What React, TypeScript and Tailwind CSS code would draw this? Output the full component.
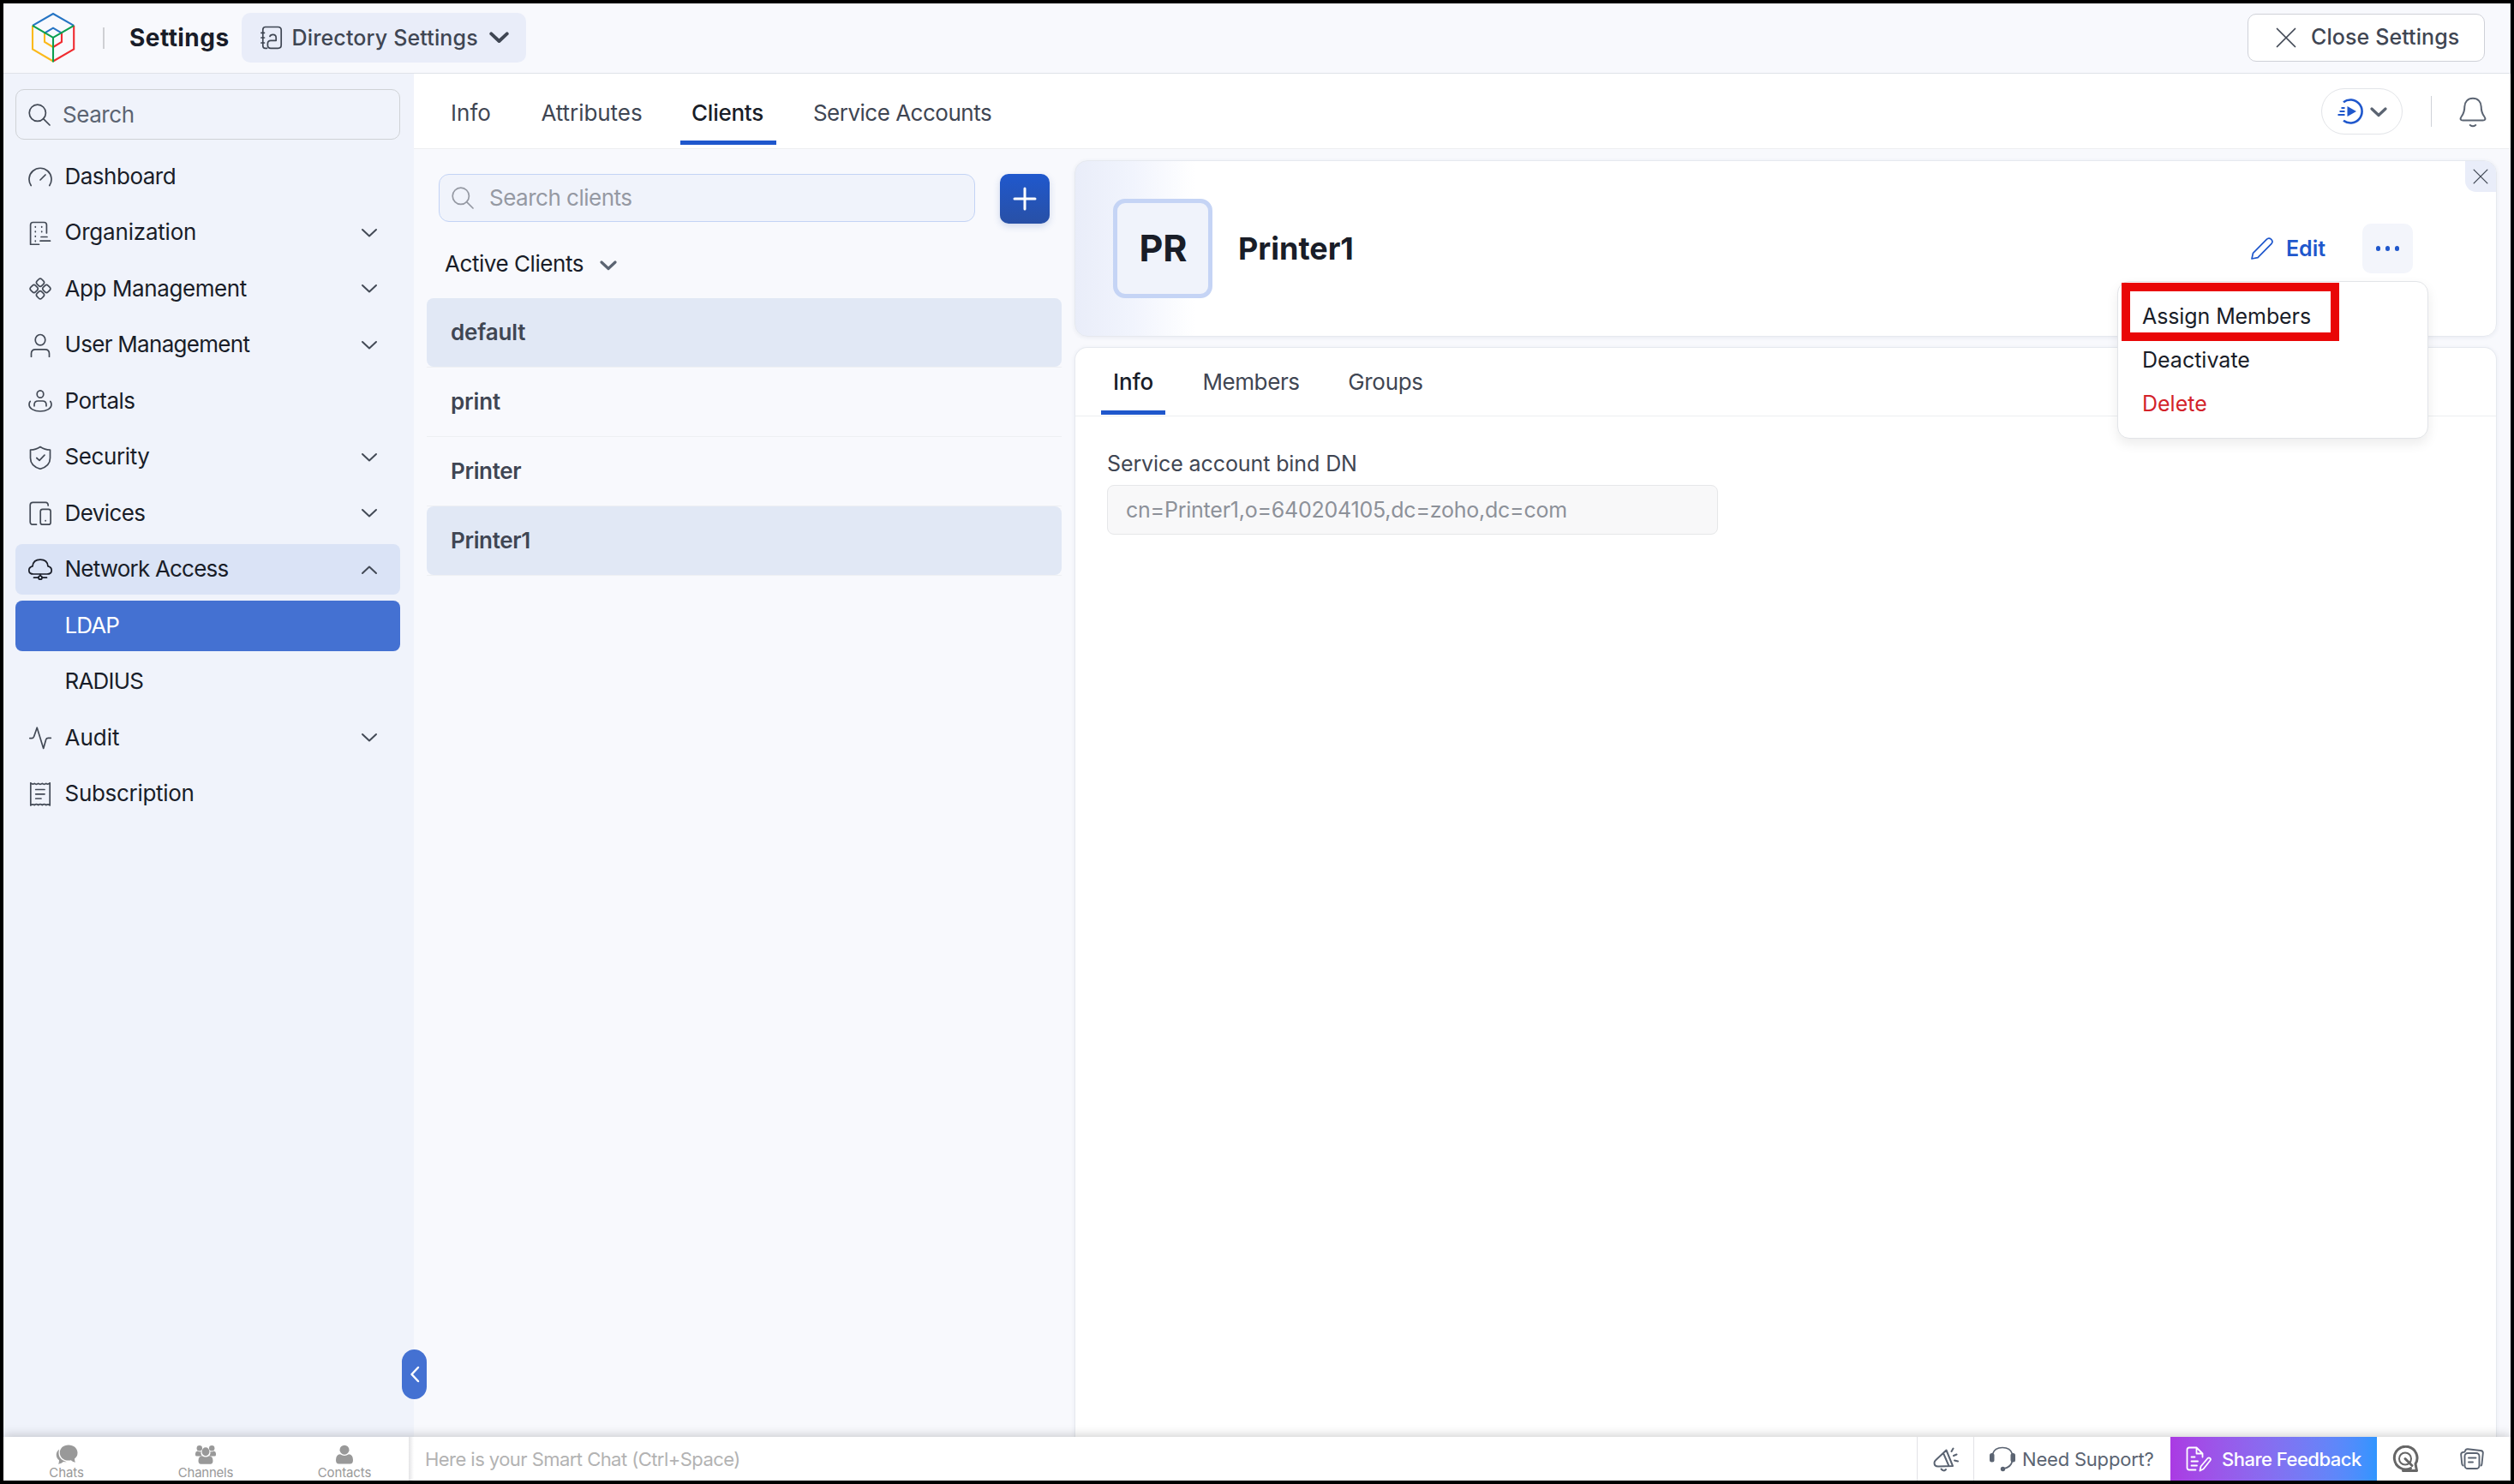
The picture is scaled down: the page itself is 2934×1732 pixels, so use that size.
import type { FC, ReactNode } from 'react';

interface IconProps {
  className?: string;
}

interface NavItem {
  label: string;
  tracking?: string;
  icon?: ReactNode;
  arrow?: 'up' | 'down';
  state?: 'open' | 'active';
}

interface Client {
  name: string;
  tracking?: string;
  highlighted?: boolean;
}

const Line: FC<{ children: ReactNode; className?: string; box?: string; width?: number }> = ({
  children,
  className = 'h-7 w-7',
  box = '0 0 28 28',
  width = 1.7,
}) => (
  <svg
    viewBox={box}
    className={`shrink-0 ${className}`}
    fill="none"
    stroke="currentColor"
    strokeWidth={width}
    strokeLinecap="round"
    strokeLinejoin="round"
  >
    {children}
  </svg>
);

const Logo: FC = () => (
  <svg viewBox="0 0 52 60" className="h-[60px] w-[52px] shrink-0" fill="none" strokeWidth="2.1">
    <path d="M16 25V35L26 41" stroke="#fbb91b" />
    <path d="M36 25V35L26 41" stroke="#f02c30" />
    <path d="M16 25V24.5L26 18.7L36 24.5V25" stroke="#2574c4" />
    <path d="M2 15.8V43.5L26 57.5" stroke="#fbb91b" />
    <path d="M50.2 15.8V43.5L26 57.5" stroke="#f02c30" />
    <path d="M2 15.8L26 2L50.2 15.8" stroke="#2574c4" />
    <path d="M2 15.8L26 29.8L50.2 15.8M26 29.8V58.5" stroke="#0a9f4f" />
  </svg>
);

const Chevron: FC<IconProps & { width?: number }> = ({ className, width = 2 }) => (
  <Line box="0 0 20 12" className={className ?? 'h-3 w-5'} width={width}>
    <path d="M2 2L10 9.5L18 2" />
  </Line>
);

const Cross: FC<IconProps> = ({ className }) => (
  <Line box="0 0 24 24" className={className} width={1.7}>
    <path d="M1.5 1.5L22.5 22.5M22.5 1.5L1.5 22.5" />
  </Line>
);

const SearchIcon: FC<IconProps> = ({ className }) => (
  <Line box="0 0 26 26" className={className ?? 'h-[26px] w-[26px]'}>
    <circle cx="10.8" cy="10.8" r="9.6" />
    <path d="M17.6 17.6L25 25" />
  </Line>
);

const navItems: NavItem[] = [
  {
    label: 'Dashboard',
    tracking: 'tracking-[-0.5px]',
    icon: (
      <Line>
        <path d="M3.2 24.5A13 13 0 1 1 24.8 24.5M14 18L20 12" />
      </Line>
    ),
  },
  {
    label: 'Organization',
    tracking: 'tracking-[-0.2px]',
    arrow: 'down',
    icon: (
      <Line>
        <path d="M21.4 14V4.5Q21.4 1.5 18.4 1.5H5.6Q2.6 1.5 2.6 4.5V27.3H12.5M15 18.5H22M14 23.2H25.5" />
        <path d="M8.3 6.5v.6M15.7 6.5v.6M8.3 12v.6M15.7 12v.6M8.3 17.5v.6M8.3 23v.6" />
      </Line>
    ),
  },
  {
    label: 'App Management',
    tracking: 'tracking-[-0.4px]',
    arrow: 'down',
    icon: (
      <Line>
        <rect x="10.1" y="2.8" width="7.8" height="7.8" rx="2.6" transform="rotate(45 14 6.7)" />
        <rect x="10.1" y="17.4" width="7.8" height="7.8" rx="2.6" transform="rotate(45 14 21.3)" />
        <rect x="2.8" y="10.1" width="7.8" height="7.8" rx="2.6" transform="rotate(45 6.7 14)" />
        <rect x="17.4" y="10.1" width="7.8" height="7.8" rx="2.6" transform="rotate(45 21.3 14)" />
      </Line>
    ),
  },
  {
    label: 'User Management',
    tracking: 'tracking-[-0.7px]',
    arrow: 'down',
    icon: (
      <Line>
        <ellipse cx="14" cy="7.7" rx="5.8" ry="6.2" />
        <path d="M3.5 27.3V23.8Q3.5 18.8 8.5 18.8H19.5Q24.5 18.8 24.5 23.8V27.3" />
      </Line>
    ),
  },
  {
    label: 'Portals',
    tracking: 'tracking-[-0.5px]',
    icon: (
      <Line>
        <ellipse cx="14" cy="6" rx="3.8" ry="4.2" />
        <path d="M7 19.8V18.5Q7 14 11.5 14H16.5Q21 14 21 18.5V19.8" />
        <path d="M2.2 14.5Q1 16 1 18C1 23 7 26 14 26S27 23 27 18Q27 16 25.8 14.5" />
      </Line>
    ),
  },
  {
    label: 'Security',
    tracking: 'tracking-[-0.4px]',
    arrow: 'down',
    icon: (
      <Line>
        <path d="M14 1.5Q19 5 25.5 5V14.5Q25.5 24 14 27.3Q2.5 24 2.5 14.5V5Q9 5 14 1.5Z" />
        <path d="M9.8 14.5L13 17.3L19 11.2" />
      </Line>
    ),
  },
  {
    label: 'Devices',
    tracking: 'tracking-[-0.6px]',
    arrow: 'down',
    icon: (
      <Line>
        <path d="M9.5 27.2H5.5Q2.2 27.2 2.2 24V4.5Q2.2 1.3 5.5 1.3H20.2Q23.2 1.3 23.2 5" />
        <rect x="14.2" y="9.3" width="11.9" height="17.9" rx="2.5" />
        <path d="M20.1 22.6v.2" />
      </Line>
    ),
  },
  {
    label: 'Network Access',
    tracking: 'tracking-[-0.8px]',
    arrow: 'up',
    state: 'open',
    icon: (
      <Line>
        <path d="M6 19C-1 19-.5 11 5 9.8C5.5 4.8 9 2.2 14 2.2S22.5 4.8 23 9.8C28.5 11 29 19 22 19Z" />
        <circle cx="14" cy="23.2" r="2" />
        <path d="M14 19.5V21.2M6.5 23.2H12M16 23.2H21.5" />
      </Line>
    ),
  },
  { label: 'LDAP', tracking: 'tracking-[-0.9px]', state: 'active' },
  { label: 'RADIUS', tracking: 'tracking-[-0.8px]' },
  {
    label: 'Audit',
    arrow: 'down',
    icon: (
      <Line>
        <path d="M1.8 14.6H4Q6 14.6 6.7 12.5L10.2 2.2L17.7 26.5L20.7 16Q21.3 14.3 23.3 14.3H26.3" />
      </Line>
    ),
  },
  {
    label: 'Subscription',
    tracking: 'tracking-[-0.3px]',
    icon: (
      <Line>
        <path d="M2.8 .8Q5 3.2 7.2 1.4Q9.4 3.2 11.7 1.4Q14 3.2 16.3 1.4Q18.6 3.2 20.8 1.4Q23 3.2 25.2 .8V27Q23 24.8 20.8 26.6Q18.6 24.8 16.3 26.6Q14 24.8 11.7 26.6Q9.4 24.8 7.2 26.6Q5 24.8 2.8 27Z" />
        <path d="M8.7 8.5H19M8.7 13.8H19M8.7 19H15" />
      </Line>
    ),
  },
];

const clients: Client[] = [
  { name: 'default', tracking: 'tracking-[-0.15px]', highlighted: true },
  { name: 'print', tracking: 'tracking-[-0.1px]' },
  { name: 'Printer', tracking: 'tracking-[-0.35px]' },
  { name: 'Printer1', tracking: 'tracking-[-0.35px]', highlighted: true },
];

const Header: FC = () => (
  <header className="flex h-[82px] shrink-0 items-center border-b border-r border-[#dfe2e8] bg-[#f8f9fd] pb-px pl-8 pr-[29px]">
    <Logo />
    <div className="ml-8 h-[25px] w-[2px] bg-[#cfd0d4]" />
    <h1 className="ml-[29px] text-[28px] font-bold tracking-[0.45px] text-[#191d28]">Settings</h1>
    <button className="ml-[14px] flex h-[58px] w-[332px] items-center rounded-[10px] bg-[#e9edf9] pl-[22px] text-[#3f4653]">
      <Line box="0 0 26 28" className="h-7 w-[26px]">
        <path d="M7.5 26.3H5.5Q2.8 26.3 2.8 23.5V4.5Q2.8 1.5 5.8 1.5H20.5Q24.2 1.5 24.2 5.2V22.5Q24.2 26.3 20.5 26.3H12Q8.4 26.3 8.4 23V21Q8.4 17.3 12 17.3H18.2V14Q18.2 10.3 14.6 10.3Q11.5 10.3 11 12.5" />
        <path d="M.9 8.3H4.5M.9 14H4.5M.9 20H4.5" />
      </Line>
      <span className="ml-[11px] pt-px text-[25px] font-medium tracking-[0.15px]">Directory Settings</span>
      <Chevron className="ml-[13px] h-[14px] w-[23px]" width={3.4} />
    </button>
    <button className="ml-auto flex h-14 w-[277px] items-center rounded-[10px] border border-[#cfd1d8] bg-white pl-[32px] text-[#3f4653]">
      <Cross className="h-6 w-6" />
      <span className="ml-[17px] text-[25px] font-medium tracking-[0.1px]">Close Settings</span>
    </button>
  </header>
);

const Sidebar: FC = () => (
  <aside className="w-[479px] shrink-0 bg-[#f0f3fb] pl-[14px] pt-[18px]">
    <div className="flex h-[59px] w-[449px] items-center rounded-[10px] border border-[#cfd2d6] pl-[14px] text-[#434a56]">
      <SearchIcon />
      <span className="ml-[14px] text-[26px] tracking-[-0.45px] text-[#5b6472]">Search</span>
    </div>
    <nav className="mt-[13.5px] flex w-[449px] flex-col gap-[6.5px]">
      {navItems.map((item) => (
        <div
          key={item.label}
          className={`flex h-[59px] items-center rounded-lg pl-[14.5px] pr-[26px] ${
            item.state === 'active'
              ? 'bg-[#4471d2] text-white'
              : item.state === 'open'
                ? 'bg-[#dae3f6] text-[#191d28]'
                : 'text-[#434a56]'
          }`}
        >
          <span className="h-7 w-7">{item.icon}</span>
          <span
            className={`ml-[15px] pb-[2px] text-[26px] ${item.tracking ?? ''} ${
              item.state === 'active' ? 'text-white' : 'text-[#191d28]'
            }`}
          >
            {item.label}
          </span>
          {item.arrow && (
            <Chevron className={`ml-auto h-3 w-5 text-[#434a56] ${item.arrow === 'up' ? 'rotate-180' : ''}`} />
          )}
        </div>
      ))}
    </nav>
  </aside>
);

const TopTabs: FC = () => (
  <div className="flex h-[88px] shrink-0 items-center border-b border-[#eceef0] bg-white pl-[29px] pr-[28px]">
    <div className="flex h-full items-end gap-[30px] pb-1 text-[26px] text-[#3f4653]">
      <span className="flex h-20 w-[75px] items-center justify-center pt-[4px]">Info</span>
      <span className="flex h-20 w-[147px] items-center justify-center pt-[4px] tracking-[-0.05px]">Attributes</span>
      <span className="flex h-20 w-[112px] items-center justify-center border-b-[5px] border-[#1f57cc] pr-[2px] pt-[9px] font-medium tracking-[-0.25px] text-[#191d28]">
        Clients
      </span>
      <span className="flex h-20 w-[237px] items-center justify-center pr-[3px] pt-[4px] tracking-[-0.5px]">
        Service Accounts
      </span>
    </div>
    <button className="ml-auto flex h-[54px] w-[95px] items-center rounded-full border border-[#e2e4e8] pl-[18px] text-[#5b6472]">
      <svg viewBox="0 0 30 30" className="h-[30px] w-[30px]" fill="none">
        <path d="M7 4.2A13.5 13.5 0 1 1 7 25.8" stroke="#1f57cc" strokeWidth="2.6" />
        <path d="M11.5 9L22 15L11.5 21Z" fill="#1f57cc" />
        <path d="M4.5 11H8.5M2.5 15H8.5M.5 19H8.5" stroke="#1f57cc" strokeWidth="1.8" />
      </svg>
      <Chevron className="ml-[8px] mt-[3px] h-3 w-5" width={3.2} />
    </button>
    <div className="ml-[33px] h-9 w-px bg-[#cfd2d8]" />
    <Line box="0 0 32 36" className="ml-[32px] mt-[2px] h-9 w-8 text-[#5b6472]" width={2}>
      <path d="M16 1.8C10 1.8 6.3 6 6.3 11.5C6.3 17 5.5 19 3 22.5C.5 26 1.5 27.5 4.5 27.5H27.5C30.5 27.5 31.5 26 29 22.5C26.5 19 25.7 17 25.7 11.5C25.7 6 22 1.8 16 1.8Z" />
      <path d="M12.8 33Q16 35.6 19.2 33" />
    </Line>
  </div>
);

const ClientList: FC = () => (
  <div className="w-[771px] shrink-0 pl-[15px] pt-[29px]">
    <div className="flex pl-[14px]">
      <div className="flex h-14 w-[626px] items-center rounded-xl border border-[#c3d3f5] bg-[#f0f3fb] pl-[14px] text-[#9599a3]">
        <SearchIcon />
        <span className="ml-[18px] pb-px text-[26px] tracking-[-0.5px]">Search clients</span>
      </div>
      <button className="ml-[29px] flex h-[58px] w-[58px] items-center justify-center rounded-[10px] bg-gradient-to-b from-[#1f58cd] to-[#2850a6] text-white shadow-[0_3px_8px_rgba(40,80,166,0.2)]">
        <Line className="h-7 w-7" width={3}>
          <path d="M14 2V26M2 14H26" />
        </Line>
      </button>
    </div>
    <div className="mt-6 flex h-[46px] items-center pl-[21px]">
      <span className="pb-px text-[26px] tracking-[-0.45px] text-[#191d28]">Active Clients</span>
      <Chevron className="ml-[19px] mt-1 h-3 w-5 text-[#5b6472]" width={3.2} />
    </div>
    <ul className="mt-[17px] w-[741px]">
      {clients.map((client) => (
        <li key={client.name} className="h-[81px] border-b border-[#eef0f3]">
          <div
            className={`flex h-20 items-center rounded-lg pl-[28px] ${client.highlighted ? 'bg-[#e1e8f5]' : ''}`}
          >
            <span className={`pb-px text-[26px] font-semibold text-[#3f4653] ${client.tracking ?? ''}`}>
              {client.name}
            </span>
          </div>
        </li>
      ))}
    </ul>
  </div>
);

const ActionMenu: FC = () => (
  <div className="absolute right-[79px] top-[140px] z-10 h-[184px] w-[363px] rounded-[14px] border border-[#e2e4e8] bg-white pl-[4px] pt-[1px] shadow-[0_6px_14px_rgba(0,0,0,0.08)]">
    <div className="flex h-[68px] w-[254px] items-center border-10 border-[#e90707] pl-[14px] pt-[11px] text-[25px] text-[#191d28]">
      <span className="whitespace-nowrap tracking-[-0.1px]">Assign Members</span>
    </div>
    <div className="-mt-[3px] flex h-[51px] items-center pl-[24px] text-[25px] text-[#191d28]">
      <span>Deactivate</span>
    </div>
    <div className="flex h-[51px] items-center pl-[24px] text-[25px] text-[#d3222a]">
      <span>Delete</span>
    </div>
  </div>
);

const ClientDetail: FC = () => (
  <div className="flex flex-1 flex-col pr-[16px] pt-[13px]">
    <section className="relative flex h-[206px] shrink-0 items-center rounded-[15px] border border-[#e6e9ef] bg-[linear-gradient(90deg,#e9edf9_0px,#f1f4fd_65px,#ffffff_140px)] pl-[44px] shadow-[0_1px_5px_rgba(40,60,100,0.08)]">
      <div className="flex h-[116px] w-[116px] items-center justify-center rounded-[14px] border-[5px] border-[#c5d4f5] bg-[#f0f3fb]">
        <span className="-mt-[2px] ml-px text-[43px] font-bold text-[#191d28]">PR</span>
      </div>
      <h2 className="ml-[30px] text-[36px] font-bold text-[#191d28]">Printer1</h2>
      <button className="ml-auto flex items-center text-[#1f57cc]">
        <Line box="0 0 26 26" className="h-[26px] w-[26px]">
          <path d="M1 25L2.5 18.3L18.3 2.3Q20.8-.2 23.7 2.3Q26.3 5 23.8 7.6L8 23.6Z" />
        </Line>
        <span className="ml-[15px] pt-px text-[25px] font-semibold">Edit</span>
      </button>
      <button className="ml-[43px] mr-[97px] flex h-[58px] w-[59px] items-center justify-center gap-[5.4px] rounded-[10px] bg-[#f3f5fb]">
        <i className="h-[5.6px] w-[5.6px] rounded-full bg-[#1f57cc]" />
        <i className="h-[5.6px] w-[5.6px] rounded-full bg-[#1f57cc]" />
        <i className="h-[5.6px] w-[5.6px] rounded-full bg-[#1f57cc]" />
      </button>
      <button className="absolute right-0 top-0 flex h-9 w-9 items-center justify-center rounded-bl-[13px] rounded-tr-[14px] bg-[#e9edf9] text-[#3f4653]">
        <Cross className="h-[18px] w-[18px]" />
      </button>
      <ActionMenu />
    </section>

    <section className="mt-3 flex-1 rounded-t-[15px] border border-b-0 border-[#e6e9ef] bg-white shadow-[0_1px_5px_rgba(40,60,100,0.08)]">
      <div className="flex h-20 items-start gap-[30px] border-b border-[#eceef0] pl-[30px] text-[26px] text-[#3f4653]">
        <span className="flex h-[78px] w-[75px] items-center justify-center border-b-[5px] border-[#1f57cc] pt-[6px] font-medium tracking-[-0.2px] text-[#191d28]">
          Info
        </span>
        <span className="flex h-[78px] w-[140px] items-center justify-center pt-[1px] tracking-[-0.4px]">
          Members
        </span>
        <span className="flex h-[78px] w-[114px] items-center justify-center pt-[1px] tracking-[-0.3px]">
          Groups
        </span>
      </div>
      <div className="pl-[37px] pt-[36px]">
        <label className="block h-[38px] text-[25px] leading-[38px] tracking-[-0.1px] text-[#3f4653]">
          Service account bind DN
        </label>
        <div className="mt-[6px] flex h-[58px] w-[713px] items-center rounded-lg border border-[#e6e7e9] bg-[#f8f8f9] pl-[21px] pt-px text-[25px] tracking-[-0.23px] text-[#8d9199]">
          cn=Printer1,o=640204105,dc=zoho,dc=com
        </div>
      </div>
    </section>
  </div>
);

const Footer: FC = () => (
  <footer className="relative z-20 flex h-[51px] shrink-0 bg-white shadow-[0_-1px_12px_rgba(0,0,0,0.22)]">
    <div className="flex w-[473px] shrink-0 text-[15px] leading-[19px] text-[#999999]">
      <div className="flex w-[147px] flex-col items-center pt-[9px]">
        <svg viewBox="0 0 26 23" className="h-[23px] w-[26px]" fill="currentColor">
          <path d="M4.2 5.5C-.8 9.5 0 15 4 18.2Q4 21 3 22.8Q7 22 9 20Q11 20.5 12.8 20.2C3.5 17.5 2.5 11 4.2 5.5Z" />
          <path d="M15 .5C8.8 .5 4.8 4.4 4.8 9.4S8.8 18.6 15 18.6Q16.5 18.6 17.8 18.2Q20 20.4 23 20.8Q22 19 22 16.5Q25.5 13.8 25.5 9.5C25.5 4.4 21 .5 15 .5Z" />
        </svg>
        <span className="tracking-[-0.1px]">Chats</span>
      </div>
      <div className="flex w-[178px] flex-col items-center pt-[9px]">
        <svg viewBox="0 0 26 23" className="h-[23px] w-[26px]" fill="currentColor">
          <circle cx="5.8" cy="4.2" r="3.2" />
          <circle cx="20.2" cy="4.2" r="3.2" />
          <path d="M1 10.5Q1 8 3.5 7.6Q5.5 9 7.5 7.9Q7 11 8.8 13.6H2.5Q1 13.6 1 12Z" />
          <path d="M25 10.5Q25 8 22.5 7.6Q20.5 9 18.5 7.9Q19 11 17.2 13.6H23.5Q25 13.6 25 12Z" />
          <ellipse cx="13" cy="8.3" rx="4.4" ry="5" />
          <path d="M4.5 19Q4.5 13.6 9 13.3Q13 15.8 17 13.3Q21.5 13.6 21.5 19Q21.5 22.7 18.5 22.7H7.5Q4.5 22.7 4.5 19Z" />
        </svg>
        <span className="tracking-[-0.25px]">Channels</span>
      </div>
      <div className="flex w-[146px] flex-col items-center pt-[9px]">
        <svg viewBox="0 0 22 23" className="h-[23px] w-[22px]" fill="currentColor">
          <circle cx="11" cy="6.2" r="5.5" />
          <path d="M1 18Q1 11.8 6 11.3Q11 14.5 16 11.3Q21 11.8 21 18Q21 22.6 17.5 22.6H4.5Q1 22.6 1 18Z" />
        </svg>
        <span className="tracking-[-0.1px]">Contacts</span>
      </div>
    </div>
    <div className="w-[6px] shrink-0 bg-gradient-to-r from-[#e4e4e6] to-white" />
    <div className="flex flex-1 items-center pl-[13px] pt-[2px]">
      <span className="text-[22px] tracking-[-0.55px] text-[#b3b3b3]">Here is your Smart Chat (Ctrl+Space)</span>
    </div>
    <div className="flex w-[67px] items-center justify-center border-x border-[#e2e3e6] text-[#5b6472]">
      <Line box="0 0 30 30" className="h-[30px] w-[30px]" width={2}>
        <path d="M15.5 4.5L23 23L6 23.5Q1.5 23.5 1.5 19.5Q1.5 17.5 3 16.2ZM12 8L18.5 23M9.5 26.5Q12.5 30 15 27" />
        <path d="M21.5 6L23.5 2.5M24 11L27.5 9.5M25 16.5L29 17.5" />
      </Line>
    </div>
    <div className="flex w-[229px] items-center pl-[18px] text-[#5b6472]">
      <svg viewBox="0 0 30 30" className="h-[30px] w-[30px]" fill="none" stroke="currentColor" strokeWidth="1.7">
        <path d="M3.5 9C5 4 9.5 1.5 15 1.5S25 4 26.5 9M26.5 17Q25 24.5 16.5 26" />
        <rect x="0" y="8" width="5.5" height="10.5" rx="2.5" fill="currentColor" stroke="none" />
        <rect x="24.5" y="8" width="5.5" height="10.5" rx="2.5" fill="currentColor" stroke="none" />
        <circle cx="15.5" cy="26.5" r="2.7" fill="currentColor" stroke="none" />
      </svg>
      <span className="ml-[8px] whitespace-nowrap pt-px text-[22px] tracking-[-0.2px]">Need Support?</span>
    </div>
    <div className="flex w-[241px] items-center bg-gradient-to-r from-[#aa3ae3] to-[#2f95ff] pl-[18px] text-white">
      <Line box="0 0 30 30" className="h-[30px] w-[30px]" width={1.8}>
        <path d="M11.5 27.5H4Q1.5 27.5 1.5 25V4Q1.5 1.5 4 1.5H12.5L19.5 8.5V12.5M12.5 1.5V8.5H19.5M6.5 12.5H10.5M6.5 17.5H14M6.5 22.5H13" />
        <path d="M16.5 28.5L17.5 23.5L25.5 14Q27 12.8 28.3 14Q29.5 15.2 28.5 16.5L20.5 26.5Z" />
      </Line>
      <span className="ml-[12px] whitespace-nowrap pt-px text-[22px] font-medium tracking-[-0.5px]">
        Share Feedback
      </span>
    </div>
    <div className="flex w-[156px] items-center pl-[17px]">
      <Line box="0 0 32 32" className="h-8 w-8 text-[#666666]" width={3}>
        <path d="M22.5 26.5A13.3 13.3 0 1 1 28 21.5L29.5 29.5H13.5" />
        <circle cx="16" cy="15.5" r="7" strokeWidth="2" />
        <path d="M16 15.5L24 23.5" />
      </Line>
      <Line box="0 0 28 26" className="ml-[48px] h-[26px] w-7 text-[#5b6472]" width={1.9}>
        <rect x="5.5" y="6" width="17" height="18" rx="3.5" />
        <path d="M3.5 20.5Q2.5 20 2.2 18L1.2 8Q1 5 4 4.7L5.5 4.5M6 3.5Q6.5 1.2 9 1.3L24 3Q27 3.3 26.8 6L25.5 18.5Q25.2 20.3 24.5 20.5M10 11.5H18.5M10 16.5H15" />
      </Line>
    </div>
  </footer>
);

export default function App() {
  return (
    <div className="flex h-[1732px] w-[2934px] flex-col overflow-hidden border-4 border-black bg-[#f8f9fd] font-['Inter','Liberation_Sans',sans-serif]">
      <Header />
      <div className="relative flex min-h-0 flex-1">
        <Sidebar />
        <main className="flex flex-1 flex-col">
          <TopTabs />
          <div className="flex min-h-0 flex-1">
            <ClientList />
            <ClientDetail />
          </div>
        </main>
        <button className="absolute left-[465px] top-[1489px] flex h-[58px] w-[29px] items-center justify-center rounded-full bg-[#4471d2] text-white">
          <Chevron className="h-3 w-5 shrink-0 rotate-90" width={2.5} />
        </button>
      </div>
      <Footer />
    </div>
  );
}
